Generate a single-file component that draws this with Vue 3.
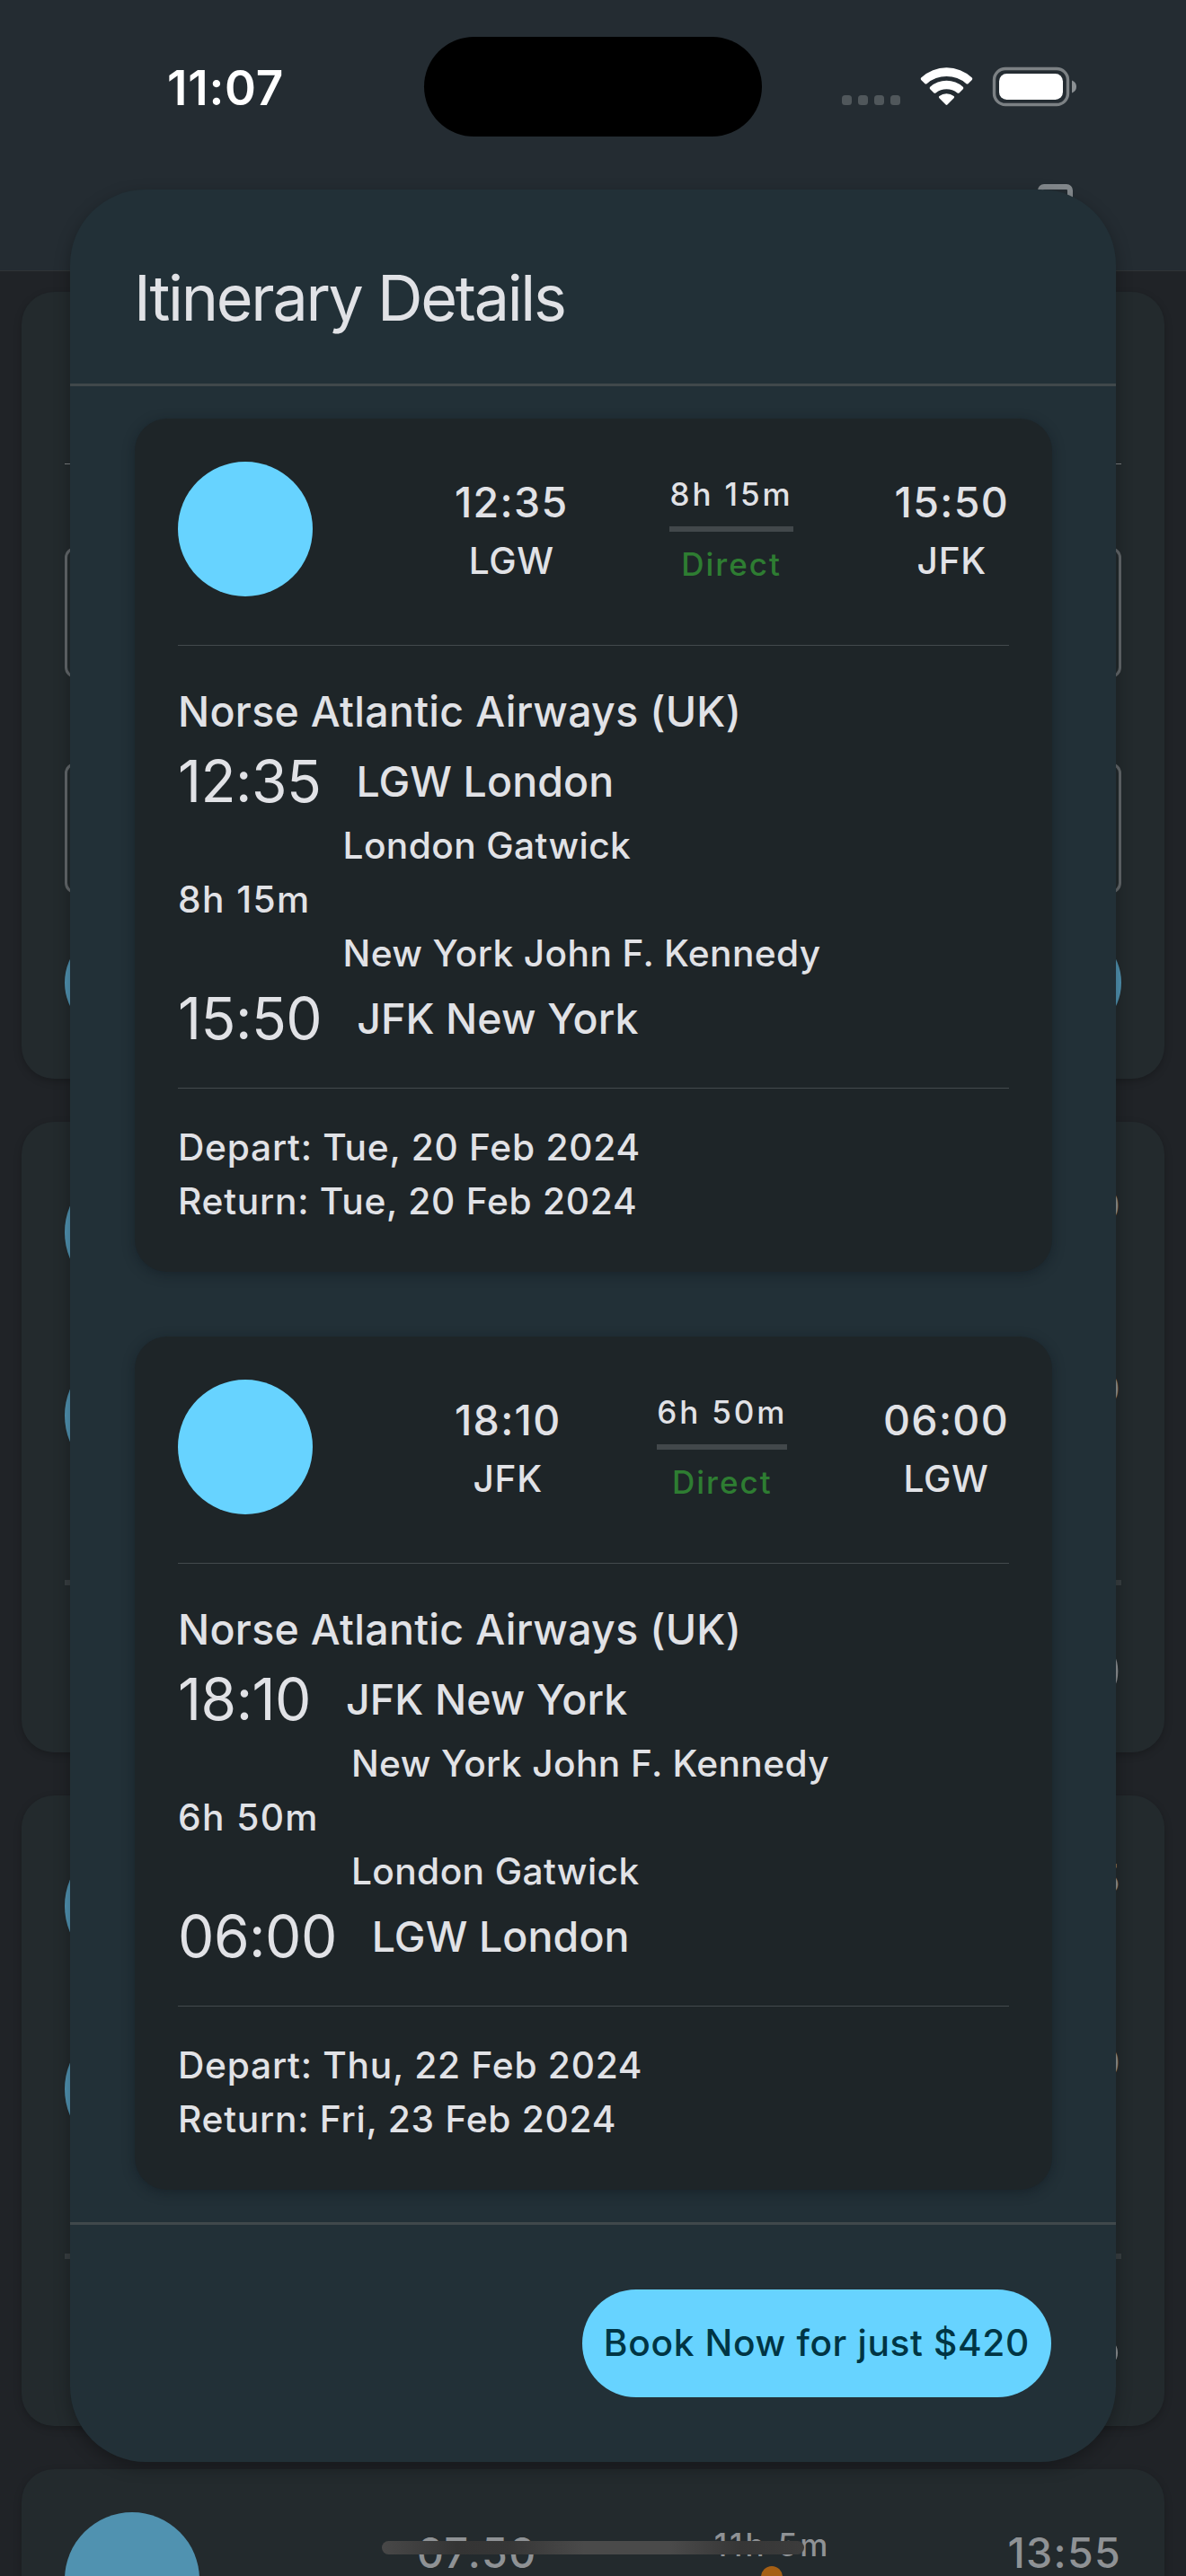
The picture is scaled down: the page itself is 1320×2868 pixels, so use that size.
<script setup>
const legs = [
  {
    airline: 'Norse Atlantic Airways (UK)',
    duration: '8h 15m',
    from: { time: '12:35', code: 'LGW', city: 'London', airport: 'London Gatwick' },
    to: { time: '15:50', code: 'JFK', city: 'New York', airport: 'New York John F. Kennedy' },
    depart: 'Tue, 20 Feb 2024',
    back: 'Tue, 20 Feb 2024',
  },
  {
    airline: 'Norse Atlantic Airways (UK)',
    duration: '6h 50m',
    from: { time: '18:10', code: 'JFK', city: 'New York', airport: 'New York John F. Kennedy' },
    to: { time: '06:00', code: 'LGW', city: 'London', airport: 'London Gatwick' },
    depart: 'Thu, 22 Feb 2024',
    back: 'Fri, 23 Feb 2024',
  },
]

const results = [
  { arrivals: ['15:50', '06:00'], price: '$420' },
  { arrivals: ['15:55', '06:00'], price: '$425' },
]
</script>

<template>
  <div class="screen">
    <header class="app-bar"><i class="bar-icon"></i></header>
    <main class="page">
      <section class="panel search">
        <hr class="thin" />
        <div class="field"></div>
        <div class="field"></div>
        <div class="search-btn"></div>
      </section>
      <section v-for="(r, i) in results" :key="i" class="panel result">
        <div v-for="(a, j) in r.arrivals" :key="j" class="result-row">
          <i class="logo"></i>
          <div class="stop"><span class="t-time">{{ a }}</span><span class="t-code"></span></div>
        </div>
        <hr class="thick" />
        <div class="price">{{ r.price }}</div>
      </section>
      <section class="panel result last">
        <div class="result-row">
          <i class="logo"></i>
          <div class="route">
            <div class="stop"><span class="t-time">07:50</span><span class="t-code"></span></div>
            <div class="middle"><span class="t-small">11h 5m</span><i class="dot"></i></div>
            <div class="stop"><span class="t-time">13:55</span><span class="t-code"></span></div>
          </div>
        </div>
      </section>
    </main>

    <div class="dialog">
      <h1>Itinerary Details</h1>
      <div class="content">
        <article v-for="(l, i) in legs" :key="i" class="leg">
          <div class="summary">
            <i class="logo"></i>
            <div class="route">
              <div class="stop"><span class="t-time">{{ l.from.time }}</span><span class="t-code">{{ l.from.code }}</span></div>
              <div class="middle">
                <span class="t-small">{{ l.duration }}</span>
                <i class="track"></i>
                <span class="t-small direct">Direct</span>
              </div>
              <div class="stop"><span class="t-time">{{ l.to.time }}</span><span class="t-code">{{ l.to.code }}</span></div>
            </div>
          </div>
          <hr class="rule" />
          <div class="airline">{{ l.airline }}</div>
          <div class="timeline">
            <div class="point"><span class="t-big">{{ l.from.time }}</span><span class="t-city">{{ l.from.code }} {{ l.from.city }}</span></div>
            <span class="t-body airport">{{ l.from.airport }}</span>
            <span class="t-body duration">{{ l.duration }}</span>
            <span class="t-body airport arrival">{{ l.to.airport }}</span>
            <div class="point"><span class="t-big">{{ l.to.time }}</span><span class="t-city">{{ l.to.code }} {{ l.to.city }}</span></div>
          </div>
          <hr class="rule lower" />
          <div class="t-body">Depart: {{ l.depart }}</div>
          <div class="t-body">Return: {{ l.back }}</div>
        </article>
      </div>
      <footer><button class="book">Book Now for just $420</button></footer>
    </div>

    <div class="status">
      <span class="clock">11:07</span>
      <i class="island"></i>
      <svg class="indicators" width="264" height="46" viewBox="0 0 264 46">
        <g fill="#50575b">
          <rect x="0" y="32" width="11" height="11" rx="3.5" />
          <rect x="18" y="32" width="11" height="11" rx="3.5" />
          <rect x="36" y="32" width="11" height="11" rx="3.5" />
          <rect x="54" y="32" width="11" height="11" rx="3.5" />
        </g>
        <g fill="#fff">
          <path d="M88.2 12.5a2 2 0 0 0 0 2.4l4.3 4.3q1 .8 2 0a33.5 33.5 0 0 1 44 0q1 .8 2 0l4.300-4.300a2 2 0 0 0 0-2.400a41.500 41.500 0 0 0-56.600 0z" />
          <path d="M98.200 22.700a1.800 1.800 0 0 0 0 2.500l4.300 4.200q1 .800 2 0a19.500 19.500 0 0 1 24 0q1 .800 2 0l4.300-4.200a1.800 1.800 0 0 0 0-2.500a27.500 27.500 0 0 0-36.600 0z" />
          <path d="M108.400 33a1.500 1.500 0 0 0 0 2.200l7.200 7.300q.900.800 1.800 0l7.200-7.300a1.500 1.500 0 0 0 0-2.200a13 13 0 0 0-16.200 0z" />
        </g>
        <rect x="169.500" y="2.500" width="82" height="40" rx="12.500" fill="none" stroke="#7c8184" stroke-width="3.400" />
        <rect x="175" y="8" width="71" height="29" rx="8.500" fill="#fff" />
        <path d="M256 15.500q5 2 5 7t-5 7z" fill="#8b9093" />
      </svg>
    </div>
    <div class="home"></div>
  </div>
</template>

<style>
body { margin: 0; background: #202327; }
</style>

<style scoped>
* { box-sizing: border-box; }
i { display: block; flex: none; }
hr { border: 0; margin: 0; }
.screen {
  position: relative;
  width: 1320px;
  height: 2868px;
  overflow: hidden;
  background: #202327;
  color: #e1e2e6;
  font-family: Inter, "Liberation Sans", sans-serif;
}

/* page under the dialog */
.app-bar {
  height: 302px;
  padding: 205px 126px 0 0;
  display: flex;
  justify-content: flex-end;
  background: #242c32;
  border-bottom: 1px solid #303436;
}
.bar-icon { width: 39px; height: 54px; border: 6px solid #84898d; border-radius: 7px; }
.page { display: flex; flex-direction: column; gap: 48px; padding: 23px 24px 0; color: #8f9295; }
.panel {
  flex: none;
  border-radius: 36px;
  background: #232a2d;
  padding: 48px;
  box-shadow: 0 3px 9px rgba(0, 0, 0, .22);
}
.search { height: 876px; padding-top: 191px; }
.thin { height: 1px; background: #7a7e80; margin-bottom: 92px; }
.field { height: 146px; border: 3px solid #62676a; border-radius: 12px; margin-bottom: 94px; }
.field + .field { margin-bottom: 39px; }
.search-btn { height: 120px; border-radius: 60px; background: #5092b0; }
.result { height: 702px; }
.result-row { height: 150px; display: flex; align-items: center; justify-content: space-between; margin-bottom: 54px; }
.result .logo { background: #5092b0; }
.thick { height: 6px; background: #383e41; margin: 108px 0 54px; }
.price { text-align: right; font-size: 64px; line-height: 84px; }
.last .route { width: 784px; }
.dot { width: 24px; height: 24px; border-radius: 50%; background: #a55f14; }
.last .middle { height: 126px; gap: 0; }

.logo { width: 150px; height: 150px; border-radius: 50%; background: #67d3ff; }
.stop, .middle { display: flex; flex-direction: column; align-items: center; }
.middle { gap: 12px; }
.track { height: 6px; align-self: stretch; background: #42484b; }
.t-time { font-size: 46.5px; font-weight: 500; line-height: 72px; letter-spacing: 1.3px; }
.t-code { height: 60px; font-size: 40.7px; font-weight: 500; line-height: 60px; letter-spacing: .7px; }
.t-small { font-size: 35px; font-weight: 500; line-height: 48px; letter-spacing: 2.9px; }
.direct { color: #2e7d32; letter-spacing: 2px; }
.t-body { font-size: 40.7px; font-weight: 500; line-height: 60px; letter-spacing: .74px; white-space: nowrap; }
.t-big { font-size: 64px; font-weight: 400; line-height: 84px; letter-spacing: -.5px; }
.t-city { font-size: 46.5px; font-weight: 500; line-height: 84px; letter-spacing: .1px; }

/* dialog */
.dialog {
  position: absolute;
  left: 78px;
  top: 211px;
  width: 1164px;
  height: 2530px;
  display: flex;
  flex-direction: column;
  border-radius: 84px;
  background: #223037;
  box-shadow: 0 6px 18px rgba(0, 0, 0, .3);
}
h1 {
  margin: 0;
  height: 219px;
  padding: 73px 72px 0 71px;
  border-bottom: 3px solid #40484b;
  font-size: 70px;
  font-weight: 400;
  line-height: 96px;
  letter-spacing: -2.3px;
}
.content {
  height: 2047px;
  padding: 36px 71px 0 72px;
  display: flex;
  flex-direction: column;
  gap: 72px;
  border-bottom: 3px solid #40484b;
}
.leg {
  height: 950px;
  flex: none;
  border-radius: 36px;
  background: #1e2528;
  padding: 48px;
  box-shadow: 0 3px 14px rgba(10, 18, 24, .4);
}
.summary { display: flex; align-items: center; justify-content: space-between; height: 150px; }
.route { width: 617px; display: flex; align-items: center; justify-content: space-between; }
.rule { height: 1px; background: #434a4d; margin: 54px 0 37px; }
.rule.lower { margin: 35px 0 36px; }
.airline { font-size: 46.5px; font-weight: 500; line-height: 72px; letter-spacing: .3px; }
.timeline { display: grid; grid-template-columns: max-content 1fr; column-gap: 36px; }
.point { grid-column: 1 / 3; display: flex; gap: 39px; }
.airport { grid-column: 2; letter-spacing: .38px; }
.arrival { grid-row: 4; }
.duration { letter-spacing: 1.4px; }
footer { display: flex; justify-content: flex-end; padding: 72px 72px 0; }
.book {
  height: 120px;
  border: 0;
  border-radius: 60px;
  padding: 0 24px;
  background: #67d3ff;
  color: #003544;
  font: 500 40.700px/120px Inter, "Liberation Sans", sans-serif;
  letter-spacing: .65px;
}

/* system chrome */
.status { position: absolute; inset: 0 0 auto; height: 200px; }
.clock {
  position: absolute;
  left: 186px;
  top: 66px;
  font-size: 53px;
  font-weight: 600;
  line-height: 64px;
  letter-spacing: .8px;
  color: #fff;
}
.island { position: absolute; left: 472px; top: 41px; width: 376px; height: 111px; border-radius: 56px; background: #000; }
.indicators { position: absolute; left: 937px; top: 74px; }
.home {
  position: absolute;
  left: 425px;
  top: 2829px;
  width: 470px;
  height: 15px;
  border-radius: 8px;
  background: linear-gradient(90deg, #484848, #343434 18%, #363636 30%, #4a4a4a 48%, #4a4a4a 68%, #363636 85%, #3c3c3c);
}
</style>
